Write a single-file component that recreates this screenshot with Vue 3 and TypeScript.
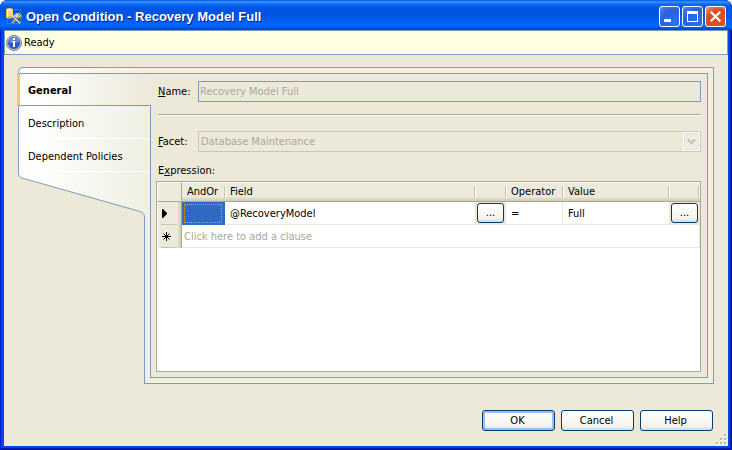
<script setup lang="ts">
import { ref } from 'vue'

interface Clause {
  field: string
  operator: string
  value: string
}

const conditionName = 'Recovery Model Full'
const facet = 'Database Maintenance'
const pages = ['General', 'Description', 'Dependent Policies']
const activePage = ref('General')
const clauses: Clause[] = [{ field: '@RecoveryModel', operator: '=', value: 'Full' }]
const actions = ['OK', 'Cancel', 'Help']
const gripDots = [
  [8, 0], [4, 4], [8, 4], [0, 8], [4, 8], [8, 8],
]
</script>

<template>
  <div class="window">
    <header class="titlebar">
      <svg class="app-icon" width="16" height="16" viewBox="0 0 16 16" aria-hidden="true">
        <rect x="1.5" y="1.5" width="13" height="14" fill="none" stroke="#27b04c" stroke-dasharray="2 1" />
        <path d="M0 2q0-2 3.500-2T7 2v7q0 1.500-3.500 1.500T0 9z" fill="#f0b840" />
        <path d="M0 2q0-1.500 3.500-1.500T7 2v6H2V4z" fill="#fbd870" />
        <path d="M1 2h4M1.500 3v6" stroke="#fffbe0" />
        <path d="M6 15l7-7" stroke="#e0a040" stroke-width="2" />
        <path d="M4 6l3 2 7 7" fill="none" stroke="#d8d2c4" stroke-width="2" />
        <path d="M8 7l3-2h2l3 3-1.500 2L12 8l-2 2z" fill="#d9d4c8" />
        <path d="M9 9l5 5M12 6l3 3" stroke="#75644c" />
      </svg>
      <h1>Open Condition - {{ conditionName }}</h1>
      <div class="caption-buttons">
        <button type="button" aria-label="Minimize">
          <svg width="19" height="19" viewBox="0 0 19 19"><path d="M4 12h7v3H4z" fill="#fff" /></svg>
        </button>
        <button type="button" aria-label="Maximize">
          <svg width="19" height="19" viewBox="0 0 19 19"><path d="M4 4h11v11H4zM5 7v7h9V7z" fill="#fff" fill-rule="evenodd" /></svg>
        </button>
        <button type="button" class="close" aria-label="Close">
          <svg width="19" height="19" viewBox="0 0 19 19"><path d="M5.500 5.500l8 8M13.500 5.500l-8 8" stroke="#fff" stroke-width="2.200" stroke-linecap="square" /></svg>
        </button>
      </div>
    </header>

    <main class="client">
      <div class="status" role="status">
        <svg width="16" height="16" viewBox="0 0 16 16" aria-hidden="true">
          <circle cx="8" cy="8" r="7.500" fill="#b4bbca" stroke="#7c86a0" />
          <circle cx="8" cy="8" r="6" fill="#2f59c4" />
          <path d="M2.500 7a5.500 5 0 0 1 11 0q-5 2-11 0z" fill="#5f86de" />
          <path d="M7 3h2v2H7zM6 6h3v6H7V7H6z" fill="#fff" />
        </svg>
        <span>Ready</span>
      </div>

      <div class="tabs">
        <nav class="pages">
          <svg class="backdrop" width="132" height="150" viewBox="0 0 132 150" aria-hidden="true">
            <defs>
              <linearGradient id="page-fill" x1="0" x2="1" y1="0" y2="0">
                <stop offset="0" stop-color="#ffffff" />
                <stop offset="0.250" stop-color="#fcfcfa" />
                <stop offset="1" stop-color="#f0efe3" />
              </linearGradient>
            </defs>
            <path d="M.5 5 5 .5H132V150H126.500Q126.500 146 122 144L4 111Q.5 109 .5 107Z" fill="url(#page-fill)" />
            <path d="M132 .5H5Q.5 .5 .5 5V107Q.5 110 4 111L122 144.500Q126.500 146 126.500 150" fill="none" stroke="#7f9db9" />
          </svg>
          <button
            v-for="page in pages"
            :key="page"
            type="button"
            class="page"
            :class="{ active: page === activePage }"
            @click="activePage = page"
          >{{ page }}</button>
          <div class="stem"></div>
        </nav>

        <div class="frame">
          <section class="panel">
            <div class="field">
              <label for="name"><u>N</u>ame:</label>
              <input id="name" type="text" :value="conditionName" disabled />
            </div>
            <hr />
            <div class="field">
              <label for="facet"><u>F</u>acet:</label>
              <div class="select">
                <select id="facet" disabled>
                  <option>{{ facet }}</option>
                </select>
                <svg width="17" height="19" viewBox="0 0 17 19" aria-hidden="true">
                  <path d="M0 0h17v19H0z" fill="#fff" />
                  <rect x="1.500" y="1.500" width="14" height="16" rx="1" fill="#eeede5" stroke="#e2e0d4" />
                  <path d="M5 7.500l3.500 3.500L12 7.500" fill="none" stroke="#c9c7ba" stroke-width="2.500" />
                </svg>
              </div>
            </div>
            <div id="expression-label" class="caption">E<u>x</u>pression:</div>
            <div class="grid">
              <table aria-labelledby="expression-label">
                <colgroup>
                  <col class="c-head" /><col class="c-andor" /><col /><col class="c-more" />
                  <col class="c-op" /><col class="c-value" /><col class="c-more" />
                </colgroup>
                <thead>
                  <tr>
                    <th class="corner"></th>
                    <th><span>AndOr</span></th>
                    <th><span>Field</span></th>
                    <th><span></span></th>
                    <th><span>Operator</span></th>
                    <th><span>Value</span></th>
                    <th><span></span></th>
                  </tr>
                </thead>
                <tbody>
                  <tr v-for="clause in clauses" :key="clause.field">
                    <td class="row-head">
                      <svg viewBox="0 0 16 21" aria-hidden="true"><path d="M1 6h1l4 4v1l-4 4H1z" fill="#000" /></svg>
                    </td>
                    <td class="current"><div></div></td>
                    <td>{{ clause.field }}</td>
                    <td class="more"><button type="button" aria-label="Edit field">...</button></td>
                    <td class="ruled">{{ clause.operator }}</td>
                    <td>{{ clause.value }}</td>
                    <td class="more"><button type="button" aria-label="Edit value">...</button></td>
                  </tr>
                  <tr>
                    <td class="row-head">
                      <svg viewBox="0 0 16 21" aria-hidden="true"><path d="M1 10.500h9M5.500 6v9M2.500 7.500l6 6M8.500 7.500l-6 6" stroke="#000" /></svg>
                    </td>
                    <td colspan="6" class="hint">Click here to add a clause</td>
                  </tr>
                </tbody>
              </table>
            </div>
          </section>
        </div>
      </div>

      <footer class="actions">
        <button
          v-for="action in actions"
          :key="action"
          type="button"
          class="push"
          :class="{ default: action === 'OK' }"
        >{{ action }}</button>
      </footer>
      <svg class="grip" width="11" height="11" viewBox="0 0 11 11" aria-hidden="true">
        <g v-for="[x, y] in gripDots" :key="`${x}-${y}`">
          <rect :x="x + 1" :y="y + 1" width="2" height="2" fill="#fff" />
          <rect :x="x" :y="y" width="2" height="2" fill="#b8b4a2" />
        </g>
      </svg>
    </main>
  </div>
</template>

<style>
body {
  margin: 0;
  background: #fff;
}
</style>

<style scoped>
.window {
  box-sizing: border-box;
  min-height: 100vh;
  display: flex;
  flex-direction: column;
  padding: 0 4px 4px;
  border-radius: 8px 8px 0 0;
  background: #0046e0;
  box-shadow: inset 1px 0 #0019cf, inset -1px 0 #00138c, inset -2px 0 #001dc0, inset 0 -1px #00138c, inset 0 -2px #001dc0;
  color: #000;
  font: 11px/14px "DejaVu Sans Condensed", "DejaVu Sans", sans-serif;
}
button,
input,
select {
  box-sizing: border-box;
  margin: 0;
  font: inherit;
  color: inherit;
}
.titlebar {
  height: 30px;
  margin: 0 -4px;
  padding: 0 6px;
  box-sizing: border-box;
  display: flex;
  align-items: center;
  gap: 4px;
  border-radius: 8px 8px 0 0;
  background: linear-gradient(#0058e6 0, #3a93ff 2px, #0a6cf5 4px, #0054e3 8px, #0055e5 16px, #0263fb 22px, #0566ff 26px, #0050d8 29px, #003dc0 30px);
}
.app-icon {
  margin-top: 2px;
}
h1 {
  flex: 1;
  margin: 4px 0 0;
  color: #fff;
  font: bold 13px/18px "Liberation Sans", sans-serif;
  text-shadow: 1px 1px #0a1883;
  white-space: nowrap;
}
.caption-buttons {
  display: flex;
  gap: 2px;
  margin-top: 2px;
}
.caption-buttons button {
  width: 21px;
  height: 21px;
  padding: 0;
  border: 1px solid #fff;
  border-radius: 3px;
  background: radial-gradient(circle at 75% 80%, #2a72f5, #2860e0 60%, #5a86f0);
}
.caption-buttons .close {
  background: radial-gradient(circle at 70% 80%, #e8501c, #dc4a24 60%, #f09a80);
}
.caption-buttons svg {
  display: block;
}
.client {
  position: relative;
  flex: 1;
  display: flex;
  flex-direction: column;
  background: #ece9d8;
}
.status {
  display: flex;
  align-items: center;
  gap: 2px;
  height: 25px;
  box-sizing: border-box;
  padding: 0 1px;
  border: 1px solid #7f9db9;
  background: #ffffe1;
}
.tabs {
  flex: 1;
  display: flex;
  margin: 12px 14px 0;
}
.pages {
  position: relative;
  z-index: 1;
  flex: none;
  width: 132px;
  padding-top: 6px;
  display: flex;
  flex-direction: column;
}
.backdrop {
  position: absolute;
  left: 0;
  top: 0;
}
.page {
  position: relative;
  height: 33px;
  margin: 0 1px 0 4px;
  padding: 3px 6px 0;
  border: 0;
  border-bottom: 1px solid #fff;
  background: none;
  text-align: left;
}
.page.active {
  margin: 0 -1px 0 -1px;
  padding-left: 8px;
  border-top: 1px solid #7f9db9;
  border-bottom: 1px solid #7f9db9;
  border-left: 3px solid #fbc761;
  background: linear-gradient(90deg, #fff, #fcfcfa 25%, #ece9d8);
  font-weight: bold;
}
.stem {
  flex: 1;
  margin: 44px 0 0 126px;
  border-left: 1px solid #7f9db9;
  border-bottom: 1px solid #7f9db9;
  background: #f0efe3;
}
.frame {
  flex: 1;
  min-width: 0;
  display: flex;
  padding: 5px 5px 5px 0;
  border: 1px solid #7f9db9;
  border-left: 0;
  background: #f0efe3;
}
.panel {
  flex: 1;
  min-width: 0;
  display: flex;
  flex-direction: column;
  padding: 7px 6px 5px 5px;
  border: 1px solid #7f9db9;
  background: #ece9d8;
}
.field {
  display: flex;
  align-items: center;
  padding-left: 2px;
}
.field label {
  width: 40px;
}
.field input,
.select {
  flex: 1;
  min-width: 0;
  height: 21px;
}
.field input {
  padding: 0 1px;
  border: 1px solid #7f9db9;
  background: #ece9d8;
  color: #aca899;
}
hr {
  height: 1px;
  margin: 12px 0 15px 2px;
  border: 0;
  border-top: 1px solid #aca899;
  background: #fff;
}
.select {
  position: relative;
}
select {
  width: 100%;
  height: 21px;
  padding: 0 18px 0 2px;
  border: 1px solid #c9c7ba;
  border-radius: 0;
  background: #ece9d8;
  color: #aca899;
  appearance: none;
  opacity: 1;
}
.select svg {
  position: absolute;
  top: 1px;
  right: 1px;
}
.caption {
  margin: 12px 0 3px;
  padding-left: 2px;
}
.grid {
  flex: 1;
  border: 1px solid #aca899;
  background: #fff;
}
table {
  width: 100%;
  table-layout: fixed;
  border-collapse: separate;
  border-spacing: 0;
}
.c-head { width: 25px; }
.c-andor { width: 43px; }
.c-more { width: 31px; }
.c-op { width: 57px; }
.c-value { width: 106px; }
th,
td {
  box-sizing: border-box;
  padding: 0;
  text-align: left;
  font-weight: normal;
  white-space: nowrap;
}
thead tr {
  background: linear-gradient(#ebeadb 15px, #e2decd 16px, #d0ccba 19px);
}
th {
  height: 20px;
  border-top: 1px solid #fff;
  border-bottom: 1px solid #aca899;
}
th span {
  display: block;
  height: 12px;
  padding-left: 5px;
  border-right: 1px solid #c7c5b2;
  box-shadow: 1px 0 #fff;
  line-height: 12px;
}
th:last-child span {
  margin-right: 1px;
}
th.corner {
  border-left: 1px solid #fff;
  border-right: 1px solid #aca899;
  background: #ebeadb;
}
td {
  height: 23px;
  padding: 2px 0 0 5px;
  border-bottom: 1px solid #ece9d8;
}
td.row-head {
  padding: 0;
  border-left: 1px solid #fff;
  border-right: 1px solid #aca899;
  border-bottom: 0;
  background: linear-gradient(90deg, #ebeadb 19px, #dedac9 21px, #cbc7b5 23px);
}
.row-head svg {
  display: block;
  width: 16px;
  height: 21px;
  margin-left: 3px;
  border-bottom: 1px solid #c7c5b2;
  box-shadow: 0 1px #fff;
}
td.current {
  padding: 1px 2px;
  border-right: 1px solid #316ac5;
  border-bottom: 0;
  background: #316ac5;
}
.current div {
  height: 17px;
  border: 1px dotted #f0a030;
}
td.more {
  padding: 0 1px 0 2px;
  background: #ece9d8;
}
td.ruled {
  border-right: 1px solid #ece9d8;
}
td.hint {
  padding-left: 2px;
  border-right: 1px solid #ece9d8;
  color: #aca899;
}
.push,
.more button {
  border: 1px solid #003c74;
  border-radius: 3px;
  background: linear-gradient(#fff, #f3f3ee 80%, #dcd8cd);
}
.more button {
  display: block;
  width: 27px;
  height: 20px;
  padding: 0;
  line-height: 16px;
}
.actions {
  display: flex;
  justify-content: flex-end;
  gap: 6px;
  padding: 26px 15px 15px;
}
.push {
  width: 73px;
  height: 21px;
  padding: 1px 2px 0 0;
}
.push.default {
  box-shadow: inset 0 0 0 2px #9ebcf0;
}
.grip {
  position: absolute;
  right: 1px;
  bottom: 1px;
}
</style>
